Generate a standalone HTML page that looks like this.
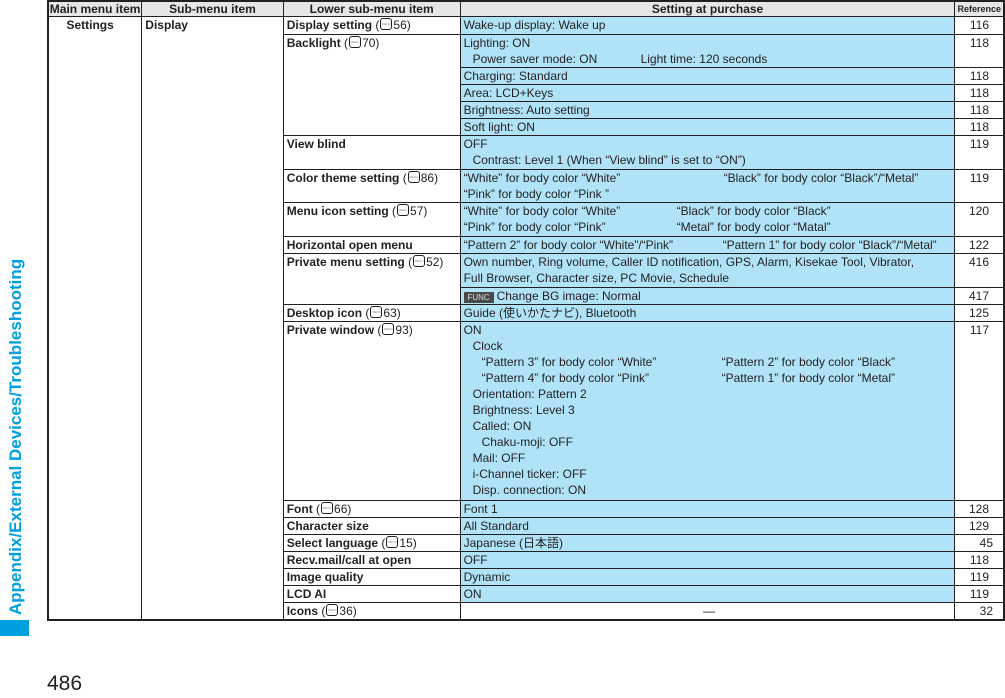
<!DOCTYPE html>
<html><head><meta charset="utf-8"><style>
body{margin:0;width:1005px;height:698px;background:#fff;position:relative;overflow:hidden;font-family:"Liberation Sans","Noto Sans CJK JP",sans-serif;font-size:12px;color:#231f20}
table{position:absolute;left:47px;top:0;border-collapse:collapse;table-layout:fixed;border:2px solid #231f20}
td{border:1px solid #231f20;padding:0 0 0 3px;vertical-align:top;line-height:16px;overflow:hidden;white-space:nowrap}
th{border:1px solid #231f20;background:#e6e6e6;font-weight:bold;font-size:12px;line-height:14px;padding:0;height:14px}
.b{font-weight:bold}
.c{background:#b0e3f8}
.r{text-align:right;padding-right:14px}
.m{display:inline-block;width:10px;height:10px;border:1px solid #231f20;border-radius:3px;vertical-align:-1px;margin:0 1px;font-size:3px;line-height:10px;text-align:center;color:#888;overflow:hidden}
.i1{padding-left:9px}.i2{padding-left:18px}
.col{display:inline-block}
.func{display:inline-block;background:#4a4a4a;color:#ddd;font-size:8px;line-height:11px;width:30px;text-align:center;margin-right:3px;vertical-align:0}
#tab{position:absolute;left:0;top:620px;width:29px;height:16px;background:#00a0e0}
#side{position:absolute;left:5px;top:615px;transform-origin:0 0;transform:rotate(-90deg);color:#00a0e0;font-weight:bold;font-size:17px;white-space:nowrap;line-height:22px}
#pn{position:absolute;left:47px;top:672px;font-size:21px;line-height:24px}
</style></head><body>
<table>
<colgroup><col style="width:94px"><col style="width:142px"><col style="width:177px"><col style="width:495px"><col style="width:49px"></colgroup>
<tr><th>Main menu item</th><th>Sub-menu item</th><th>Lower sub-menu item</th><th>Setting at purchase</th><th style="font-size:9px">Reference</th></tr>
<tr style="height:18px"><td rowspan="21" class="b" style="text-align:center;padding:0 10px 0 0">Settings</td><td rowspan="21" class="b">Display</td><td><span class="b">Display setting</span> (<span class="m">MENU</span>56)</td><td class="c">Wake-up display: Wake up</td><td class="r">116</td></tr>
<tr style="height:32px"><td rowspan="5"><span class="b">Backlight</span> (<span class="m">MENU</span>70)</td><td class="c">Lighting: ON<br><span class="i1"><span class="col" style="width:168px">Power saver mode: ON</span>Light time: 120 seconds</span></td><td class="r">118</td></tr>
<tr style="height:17px"><td class="c">Charging: Standard</td><td class="r">118</td></tr>
<tr style="height:17px"><td class="c">Area: LCD+Keys</td><td class="r">118</td></tr>
<tr style="height:17px"><td class="c">Brightness: Auto setting</td><td class="r">118</td></tr>
<tr style="height:17px"><td class="c">Soft light: ON</td><td class="r">118</td></tr>
<tr style="height:34px"><td class="b">View blind</td><td class="c">OFF<br><span class="i1">Contrast: Level 1 (When “View blind” is set to “ON”)</span></td><td class="r">119</td></tr>
<tr style="height:33px"><td><span class="b">Color theme setting</span> (<span class="m">MENU</span>86)</td><td class="c"><span class="col" style="width:260px">“White” for body color “White”</span>“Black” for body color “Black”/“Metal”<br>“Pink” for body color “Pink ”</td><td class="r">119</td></tr>
<tr style="height:34px"><td><span class="b">Menu icon setting</span> (<span class="m">MENU</span>57)</td><td class="c"><span class="col" style="width:213px">“White” for body color “White”</span>“Black” for body color “Black”<br><span class="col" style="width:213px">“Pink” for body color “Pink”</span>“Metal” for body color “Matal”</td><td class="r">120</td></tr>
<tr style="height:16px"><td class="b">Horizontal open menu</td><td class="c"><span class="col" style="width:259px">“Pattern 2” for body color “White”/“Pink”</span>“Pattern 1” for body color “Black”/“Metal”</td><td class="r">122</td></tr>
<tr style="height:34px"><td rowspan="2"><span class="b">Private menu setting</span> (<span class="m">MENU</span>52)</td><td class="c">Own number, Ring volume, Caller ID notification, GPS, Alarm, Kisekae Tool, Vibrator,<br>Full Browser, Character size, PC Movie, Schedule</td><td class="r">416</td></tr>
<tr style="height:17px"><td class="c"><span class="func">FUNC</span>Change BG image: Normal</td><td class="r">417</td></tr>
<tr style="height:17px"><td><span class="b">Desktop icon</span> (<span class="m">MENU</span>63)</td><td class="c">Guide (使いかたナビ), Bluetooth</td><td class="r">125</td></tr>
<tr style="height:179px"><td><span class="b">Private window</span> (<span class="m">MENU</span>93)</td><td class="c">ON<br><span class="i1">Clock</span><br><span class="i2"><span class="col" style="width:240px">“Pattern 3” for body color “White”</span>“Pattern 2” for body color “Black”</span><br><span class="i2"><span class="col" style="width:240px">“Pattern 4” for body color “Pink”</span>“Pattern 1” for body color “Metal”</span><br><span class="i1">Orientation: Pattern 2</span><br><span class="i1">Brightness: Level 3</span><br><span class="i1">Called: ON</span><br><span class="i2">Chaku-moji: OFF</span><br><span class="i1">Mail: OFF</span><br><span class="i1">i-Channel ticker: OFF</span><br><span class="i1">Disp. connection: ON</span></td><td class="r">117</td></tr>
<tr style="height:17px"><td><span class="b">Font</span> (<span class="m">MENU</span>66)</td><td class="c">Font 1</td><td class="r">128</td></tr>
<tr style="height:17px"><td class="b">Character size</td><td class="c">All Standard</td><td class="r">129</td></tr>
<tr style="height:17px"><td><span class="b">Select language</span> (<span class="m">MENU</span>15)</td><td class="c">Japanese (日本語)</td><td class="r" style="padding-right:10px">45</td></tr>
<tr style="height:17px"><td class="b">Recv.mail/call at open</td><td class="c">OFF</td><td class="r">118</td></tr>
<tr style="height:17px"><td class="b">Image quality</td><td class="c">Dynamic</td><td class="r">119</td></tr>
<tr style="height:17px"><td class="b">LCD AI</td><td class="c">ON</td><td class="r">119</td></tr>
<tr style="height:17px"><td><span class="b">Icons</span> (<span class="m">MENU</span>36)</td><td style="text-align:center">—</td><td class="r" style="padding-right:10px">32</td></tr>
</table>
<div id="tab"></div>
<div id="side">Appendix/External Devices/Troubleshooting</div>
<div id="pn">486</div>
</body></html>
